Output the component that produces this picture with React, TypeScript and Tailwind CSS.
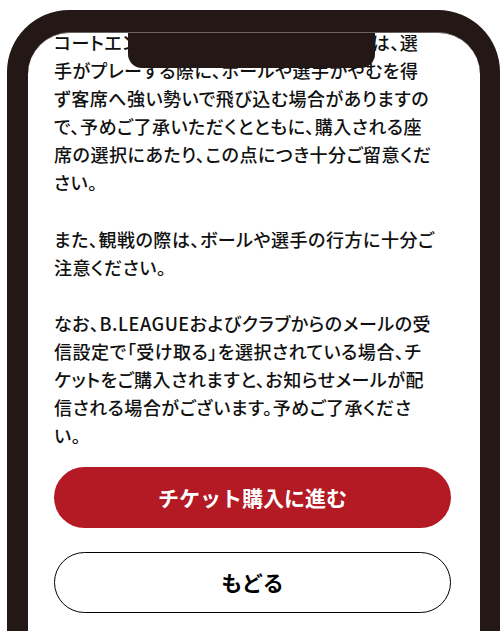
import React from 'react';

const paragraphs: React.ReactNode[][] = [
  [
    <>
      コートエ<span className="tracking-[0.08em]">ンドおよびコートサイド席付</span>近は、選
    </>,
    '手がプレーする際に、ボールや選手がやむを得',
    'ず客席へ強い勢いで飛び込む場合がありますの',
    'で、予めご了承いただくとともに、購入される座',
    '席の選択にあたり、この点につき十分ご留意くだ',
    'さい。',
  ],
  ['また、観戦の際は、ボールや選手の行方に十分ご', '注意ください。'],
  [
    'なお、B.LEAGUEおよびクラブからのメールの受',
    '信設定で「受け取る」を選択されている場合、チ',
    'ケットをご購入されますと、お知らせメールが配',
    '信される場合がございます。予めご了承くださ',
    'い。',
  ],
];

export default function App() {
  return (
    <div className="w-[501px] h-[631px] overflow-hidden bg-white pt-[10px] pl-[7px] font-['Noto_Sans_CJK_JP',sans-serif]">
      {/* phone frame */}
      <div className="w-[493px] h-[700px] bg-[#231815] rounded-t-[62px] pt-[22px] pl-[21px] pr-[20px]">
        <div className="relative h-full bg-white rounded-t-[42px] overflow-hidden border-t border-[#6b6262]">
          {/* notch */}
          <div className="absolute left-[100px] top-0 w-[247px] h-[35px] bg-[#231815] rounded-b-[14px] z-10" />

          <div className="pl-[26px] pr-[29px] -mt-[5px]">
            <div className="flex flex-col gap-[28px] text-[18px] leading-[28.1px] font-medium text-[#111] [font-feature-settings:'palt'] tracking-[0.03em]">
              {paragraphs.map((lines, i) => (
                <p key={i}>
                  {lines.map((l, j) => (
                    <span key={j} className="block whitespace-nowrap">{l}</span>
                  ))}
                </p>
              ))}
            </div>

            <div className="mt-[18px] flex flex-col gap-[24px]">
              <button className="h-[61px] w-full rounded-full bg-[#b31a24] text-white text-[21px] font-bold">
                チケット購入に進む
              </button>
              <button className="h-[61px] w-full rounded-full border-[1.5px] border-black bg-white text-black text-[21px] font-bold">
                もどる
              </button>
            </div>
          </div>
        </div>
      </div>
    </div>
  );
}
